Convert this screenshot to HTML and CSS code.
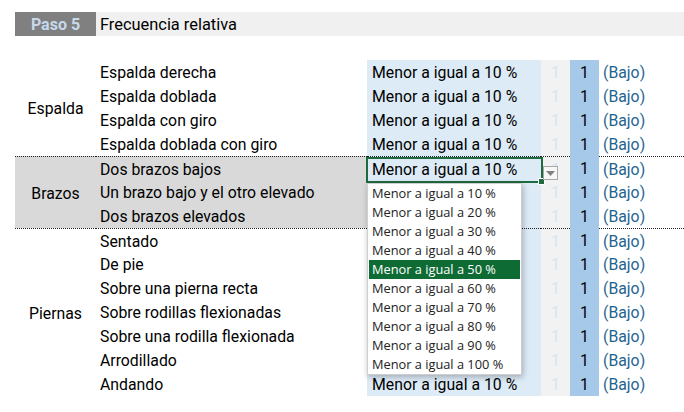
FILE: index.html
```html
<!DOCTYPE html>
<html lang="es">
<head>
<meta charset="utf-8">
<link rel="stylesheet" href="styles.css">
</head>
<body>
<div class="page">
  <div class="step">
    <div class="step-num">Paso 5</div>
    <div class="step-title">Frecuencia relativa</div>
  </div>
  <div class="sheet">
    <div class="grp span4">Espalda</div>
    <div class="item">Espalda derecha</div><div class="val">Menor a igual a 10 %</div><div class="ghost">1</div><div class="num">1</div><div class="lvl">(Bajo)</div>
    <div class="item">Espalda doblada</div><div class="val">Menor a igual a 10 %</div><div class="ghost">1</div><div class="num">1</div><div class="lvl">(Bajo)</div>
    <div class="item">Espalda con giro</div><div class="val">Menor a igual a 10 %</div><div class="ghost">1</div><div class="num">1</div><div class="lvl">(Bajo)</div>
    <div class="item">Espalda doblada con giro</div><div class="val">Menor a igual a 10 %</div><div class="ghost">1</div><div class="num">1</div><div class="lvl">(Bajo)</div>

    <div class="grp span3 shade sep">Brazos</div>
    <div class="item shade sep">Dos brazos bajos</div>
    <div class="val sep active">Menor a igual a 10 %
      <div class="frame"><span class="handle"></span></div>
      <div class="dd-btn"><svg width="9" height="5" viewBox="0 0 9 5"><path d="M0 0h9L4.5 5z" fill="#7f7f7f"/></svg></div>
      <ul class="dd-list">
        <li>Menor a igual a 10 %</li>
        <li>Menor a igual a 20 %</li>
        <li>Menor a igual a 30 %</li>
        <li>Menor a igual a 40 %</li>
        <li class="hl">Menor a igual a 50 %</li>
        <li>Menor a igual a 60 %</li>
        <li>Menor a igual a 70 %</li>
        <li>Menor a igual a 80 %</li>
        <li>Menor a igual a 90 %</li>
        <li>Menor a igual a 100 %</li>
      </ul>
    </div>
    <div class="ghost sep">1</div><div class="num">1</div><div class="lvl sep">(Bajo)</div>
    <div class="item shade">Un brazo bajo y el otro elevado</div><div class="val"></div><div class="ghost">1</div><div class="num">1</div><div class="lvl">(Bajo)</div>
    <div class="item shade">Dos brazos elevados</div><div class="val"></div><div class="ghost">1</div><div class="num">1</div><div class="lvl">(Bajo)</div>

    <div class="grp span7 sep">Piernas</div>
    <div class="item sep">Sentado</div><div class="val sep"></div><div class="ghost sep">1</div><div class="num">1</div><div class="lvl sep">(Bajo)</div>
    <div class="item">De pie</div><div class="val"></div><div class="ghost">1</div><div class="num">1</div><div class="lvl">(Bajo)</div>
    <div class="item">Sobre una pierna recta</div><div class="val"></div><div class="ghost">1</div><div class="num">1</div><div class="lvl">(Bajo)</div>
    <div class="item">Sobre rodillas flexionadas</div><div class="val"></div><div class="ghost">1</div><div class="num">1</div><div class="lvl">(Bajo)</div>
    <div class="item">Sobre una rodilla flexionada</div><div class="val"></div><div class="ghost">1</div><div class="num">1</div><div class="lvl">(Bajo)</div>
    <div class="item">Arrodillado</div><div class="val"></div><div class="ghost">1</div><div class="num">1</div><div class="lvl">(Bajo)</div>
    <div class="item">Andando</div><div class="val">Menor a igual a 10 %</div><div class="ghost">1</div><div class="num">1</div><div class="lvl">(Bajo)</div>
  </div>
</div>
</body>
</html>
```
FILE: styles.css
```css
* { box-sizing: border-box; }
html, body { margin: 0; padding: 0; background: #fff; }
body {
  font-family: Roboto, "Noto Sans", sans-serif;
  font-size: 15.8px;
  color: #000;
  width: 684px;
  height: 412px;
  overflow: hidden;
}
.page { padding: 12px 0 0 15px; }
.step { display: flex; height: 24px; }
.step-num {
  width: 81px;
  background: #808080;
  color: #c6d9ec;
  font-weight: 700;
  font-size: 16px;
  padding-top: 1px;
  display: flex; align-items: center; justify-content: center;
}
.step-title {
  flex: 1;
  background: #f0f0f0;
  display: flex; align-items: center;
  padding: 1px 0 0 4px;
  font-size: 16.4px;
}
.sheet {
  margin-top: 24px;
  display: grid;
  grid-template-columns: 81px 271px 174px 29px 29px 1fr;
  grid-auto-rows: 24px;
}
.sheet > div { display: flex; align-items: center; white-space: nowrap; padding-top: 1px; }
.grp { justify-content: center; }
.span4 { grid-row: span 4; }
.span3 { grid-row: span 3; }
.span7 { grid-row: span 7; }
.shade { background: #d9d9d9; }
.sheet > .item { padding-left: 4px; }
.sheet > .val { background: #ddebf7; padding-left: 5px; }
.ghost { background: #f2f2f2; color: #d6e5f4; justify-content: center; }
.num { background: #a6c9ea; justify-content: center; }
.sheet > .lvl { color: #23648f; padding-left: 4px; }
.sheet > .sep { border-top: 1px dotted #222; }

.active { position: relative; }
.frame {
  position: absolute;
  left: -1px; top: 0;
  width: 177px; height: 26px;
  border: 2px solid #1e6b40;
  z-index: 3;
}
.handle {
  position: absolute;
  right: -3px; bottom: -3px;
  width: 5px; height: 5px;
  background: #1e6b40;
  outline: 1px solid #fff;
}
.dd-btn {
  position: absolute;
  left: 176px; top: 9px;
  width: 15px; height: 14px;
  border: 1px solid #a8a8a8;
  background: #f7f7f7;
  display: flex; align-items: center; justify-content: center;
  z-index: 3;
}
.dd-btn svg { display: block; }
.dd-list {
  position: absolute;
  left: 0; top: 26px;
  width: 155px;
  margin: 0; padding: 0 1px;
  list-style: none;
  background: #fff;
  border: 1px solid #cfcfcf;
  box-shadow: 1px 2px 6px rgba(0,0,0,0.28);
  z-index: 4;
  font-family: "Open Sans", "Noto Sans", sans-serif;
  font-size: 12.8px;
  color: #222;
}
.dd-list li {
  height: 19px;
  line-height: 19px;
  padding-left: 3px;
}
.dd-list li.hl { background: #0e6b34; color: #fff; }
```
